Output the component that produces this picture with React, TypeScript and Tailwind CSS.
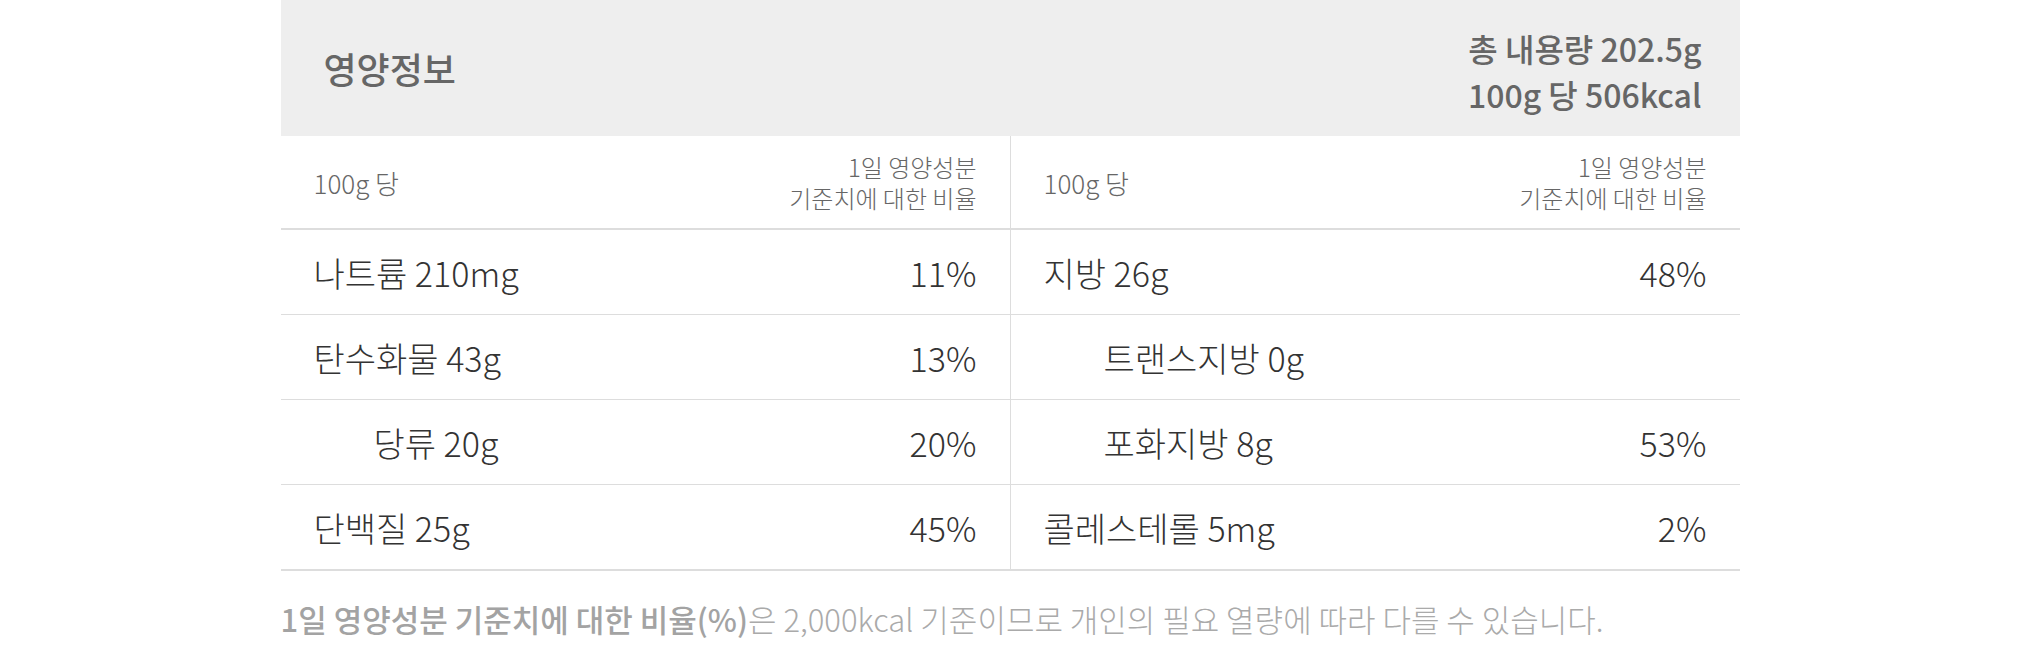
const rows: [Cell, Cell][] = [
  [
    { name: "나트륨 210mg", pct: "11%" },
    { name: "지방 26g", pct: "48%" },
  ],
  [
    { name: "탄수화물 43g", pct: "13%" },
    { name: "트랜스지방 0g", pct: "", sub: true },
  ],
  [
    { name: "당류 20g", pct: "20%", sub: true },
    { name: "포화지방 8g", pct: "53%", sub: true },
  ],
  [
    { name: "단백질 25g", pct: "45%" },
    { name: "콜레스테롤 5mg", pct: "2%" },
  ],
];

type Cell = { name: string; pct: string; sub?: boolean };

function HeadCell() {
  return (
    <div className="flex items-center justify-between px-[33px]">
      <span className="text-[26px] font-extralight text-[#666]">100g 당</span>
      <span className="text-right text-[24px] leading-[31px] font-extralight text-[#666]">
        1일 영양성분
        <br />
        기준치에 대한 비율
      </span>
    </div>
  );
}

function DataCell({ cell }: { cell: Cell }) {
  return (
    <div className="flex items-center justify-between px-[33px]">
      <span className={`text-[34px] font-extralight text-[#333] ${cell.sub ? "pl-[60px]" : ""}`}>
        {cell.name}
      </span>
      <span className="text-[34px] font-extralight text-[#333]">{cell.pct}</span>
    </div>
  );
}

export default function App() {
  return (
    <div className="min-h-[650px] bg-white font-['Noto_Sans_CJK_KR','Noto_Sans',sans-serif]">
      <div className="mx-auto w-[1459px]">
        <div className="flex h-[136px] items-center justify-between bg-[#eee] pr-[38px] pl-[43px]">
          <h2 className="text-[36px] font-medium text-[#666]">영양정보</h2>
          <div className="pt-[6px] text-right text-[32px] leading-[46px] font-medium text-[#666]">
            총 내용량 202.5g
            <br />
            100g 당 506kcal
          </div>
        </div>

        <div className="grid h-[94px] grid-cols-[1fr_1px_1fr] border-b-2 border-[#ddd]">
          <HeadCell />
          <div className="bg-[#ddd]" />
          <HeadCell />
        </div>

        {rows.map((row, i) => (
          <div
            key={i}
            className={`grid grid-cols-[1fr_1px_1fr] ${
              i === rows.length - 1 ? "h-[86px] border-b-2" : "h-[85px] border-b"
            } border-[#ddd]`}
          >
            <DataCell cell={row[0]} />
            <div className="bg-[#ddd]" />
            <DataCell cell={row[1]} />
          </div>
        ))}

        <p className="mt-[26px] text-[31px] leading-[44px] font-extralight text-[#aaa]">
          <span className="font-medium text-[#a3a3a3]">1일 영양성분 기준치에 대한 비율(%)</span>은 2,000kcal
          기준이므로 개인의 필요 열량에 따라 다를 수 있습니다.
        </p>
      </div>
    </div>
  );
}
